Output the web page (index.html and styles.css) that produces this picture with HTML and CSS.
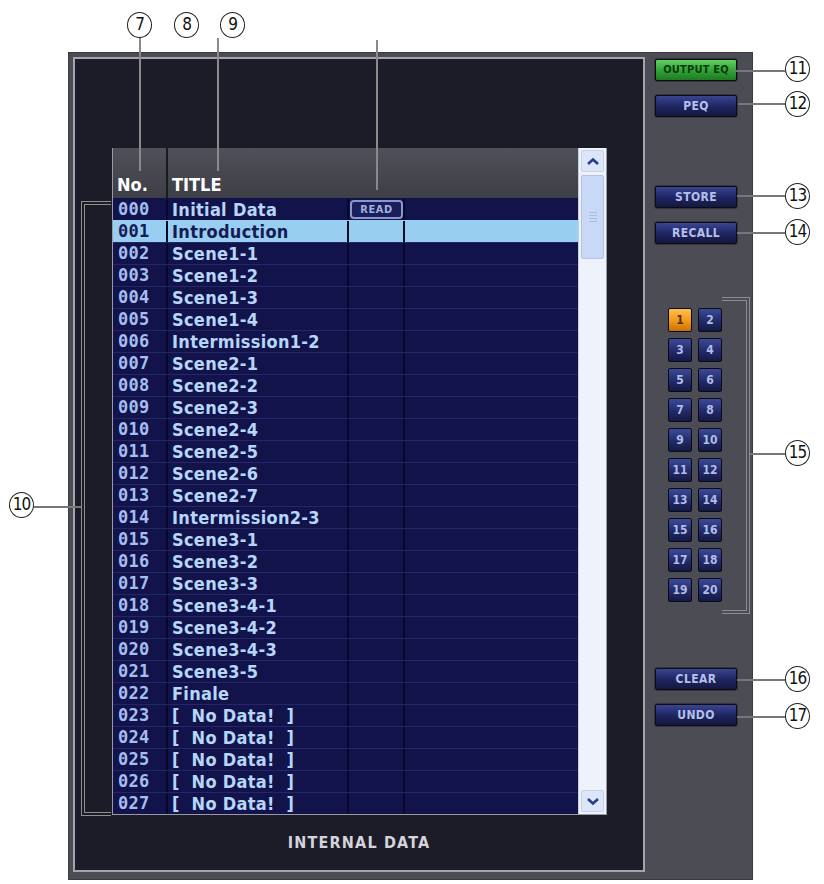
FILE: index.html
```html
<!DOCTYPE html>
<html lang="en">
<head>
  <meta charset="UTF-8">
  <title>Scene Library</title>
  <link rel="stylesheet" href="styles.css">
</head>
<body>
  <div class="figure">

    <!-- MAIN PANEL -->
    <div class="panel">
      <div class="main">
        <div class="list">
          <div class="table">
            <div class="head">
              <div class="hcell">No.</div>
              <div class="hcell nodiv">TITLE</div>
              <div class="hcell nodiv"></div>
              <div class="hcell nodiv"></div>
            </div>
            <div class="row"><span class="num">000</span><span class="title">Initial Data</span><span class="read"><b>READ</b></span><span></span></div>
            <div class="row sel"><span class="num">001</span><span class="title">Introduction</span><span></span><span></span></div>
            <div class="row"><span class="num">002</span><span class="title">Scene1-1</span><span></span><span></span></div>
            <div class="row"><span class="num">003</span><span class="title">Scene1-2</span><span></span><span></span></div>
            <div class="row"><span class="num">004</span><span class="title">Scene1-3</span><span></span><span></span></div>
            <div class="row"><span class="num">005</span><span class="title">Scene1-4</span><span></span><span></span></div>
            <div class="row"><span class="num">006</span><span class="title">Intermission1-2</span><span></span><span></span></div>
            <div class="row"><span class="num">007</span><span class="title">Scene2-1</span><span></span><span></span></div>
            <div class="row"><span class="num">008</span><span class="title">Scene2-2</span><span></span><span></span></div>
            <div class="row"><span class="num">009</span><span class="title">Scene2-3</span><span></span><span></span></div>
            <div class="row"><span class="num">010</span><span class="title">Scene2-4</span><span></span><span></span></div>
            <div class="row"><span class="num">011</span><span class="title">Scene2-5</span><span></span><span></span></div>
            <div class="row"><span class="num">012</span><span class="title">Scene2-6</span><span></span><span></span></div>
            <div class="row"><span class="num">013</span><span class="title">Scene2-7</span><span></span><span></span></div>
            <div class="row"><span class="num">014</span><span class="title">Intermission2-3</span><span></span><span></span></div>
            <div class="row"><span class="num">015</span><span class="title">Scene3-1</span><span></span><span></span></div>
            <div class="row"><span class="num">016</span><span class="title">Scene3-2</span><span></span><span></span></div>
            <div class="row"><span class="num">017</span><span class="title">Scene3-3</span><span></span><span></span></div>
            <div class="row"><span class="num">018</span><span class="title">Scene3-4-1</span><span></span><span></span></div>
            <div class="row"><span class="num">019</span><span class="title">Scene3-4-2</span><span></span><span></span></div>
            <div class="row"><span class="num">020</span><span class="title">Scene3-4-3</span><span></span><span></span></div>
            <div class="row"><span class="num">021</span><span class="title">Scene3-5</span><span></span><span></span></div>
            <div class="row"><span class="num">022</span><span class="title">Finale</span><span></span><span></span></div>
            <div class="row"><span class="num">023</span><span class="title">[&nbsp; No Data!&nbsp; ]</span><span></span><span></span></div>
            <div class="row"><span class="num">024</span><span class="title">[&nbsp; No Data!&nbsp; ]</span><span></span><span></span></div>
            <div class="row"><span class="num">025</span><span class="title">[&nbsp; No Data!&nbsp; ]</span><span></span><span></span></div>
            <div class="row"><span class="num">026</span><span class="title">[&nbsp; No Data!&nbsp; ]</span><span></span><span></span></div>
            <div class="row"><span class="num">027</span><span class="title">[&nbsp; No Data!&nbsp; ]</span><span></span><span></span></div>
          </div>
          <div class="scrollbar">
            <div class="arrow">
              <svg width="14" height="9" viewBox="0 0 14 9"><path d="M2 7 L7 2.5 L12 7" fill="none" stroke="#2a3c8c" stroke-width="2.6"/></svg>
            </div>
            <div class="thumb"><i></i><i></i><i></i><i></i></div>
            <div class="track"></div>
            <div class="arrow">
              <svg width="14" height="9" viewBox="0 0 14 9"><path d="M2 2 L7 6.5 L12 2" fill="none" stroke="#2a3c8c" stroke-width="2.6"/></svg>
            </div>
          </div>
        </div>
        <div class="caption">INTERNAL DATA</div>
      </div>

      <div class="side">
        <div class="btn green">OUTPUT EQ</div>
        <div class="btn gap-s">PEQ</div>
        <div class="btn gap-l">STORE</div>
        <div class="btn gap-s">RECALL</div>
        <div class="keys">
          <div class="key on">1</div><div class="key">2</div>
          <div class="key">3</div><div class="key">4</div>
          <div class="key">5</div><div class="key">6</div>
          <div class="key">7</div><div class="key">8</div>
          <div class="key">9</div><div class="key">10</div>
          <div class="key">11</div><div class="key">12</div>
          <div class="key">13</div><div class="key">14</div>
          <div class="key">15</div><div class="key">16</div>
          <div class="key">17</div><div class="key">18</div>
          <div class="key">19</div><div class="key">20</div>
        </div>
        <div class="btn gap-k">CLEAR</div>
        <div class="btn gap-s">UNDO</div>
      </div>
    </div>

    <!-- CALLOUTS -->
    <div class="circ c7">7</div>
    <div class="circ c8">8</div>
    <div class="circ c9">9</div>
    <div class="vline l7"></div>
    <div class="vline l9"></div>
    <div class="vline lread"></div>

    <div class="circ c10">10</div>
    <div class="hline l10"></div>
    <div class="bracket b10"></div>

    <div class="circ c11">11</div>
    <div class="circ c12">12</div>
    <div class="circ c13">13</div>
    <div class="circ c14">14</div>
    <div class="circ c15">15</div>
    <div class="circ c16">16</div>
    <div class="circ c17">17</div>
    <div class="hline l11"></div>
    <div class="hline l12"></div>
    <div class="hline l13"></div>
    <div class="hline l14"></div>
    <div class="hline l15"></div>
    <div class="hline l16"></div>
    <div class="hline l17"></div>
    <div class="bracket b15"></div>
  </div>
</body>
</html>
```

FILE: styles.css
```css
/* General */
* {
  margin: 0;
  padding: 0;
  box-sizing: border-box;
}
body {
  background: #fff;
  font-family: "DejaVu Sans Condensed", "DejaVu Sans", sans-serif;
}
.figure {
  position: relative;
  width: 824px;
  height: 884px;
  padding: 52px 0 0 68px;
  overflow: hidden;
}

/* ===== PANEL ===== */
.panel {
  display: flex;
  width: 685px;
  height: 828px;
  background: #4c4c55;
  padding: 5px 5px 8px 5px;
  box-shadow: inset 0 0 0 1px #3a3a40;
}
.main {
  display: flex;
  flex-direction: column;
  width: 572px;
  height: 815px;
  border: 2px solid #a4a4ac;
  background: #1c1c28;
  padding: 89px 0 0 37px;
}

/* ===== LIST ===== */
.list {
  display: flex;
  width: 495px;
  height: 667px;
  border: 1px solid #9a9aa6;
  border-top: none;
}
.table {
  width: 466px;
  background: #12124a;
}
.head,
.row {
  display: grid;
  grid-template-columns: 55px 181px 56px 1fr;
}
.head {
  height: 50px;
  background: linear-gradient(#505058, #3e3e46);
}
.hcell {
  display: flex;
  align-items: flex-end;
  padding: 0 0 3px 4px;
  color: #fff;
  font-weight: bold;
  font-size: 18px;
  border-right: 2px solid #1a1a22;
}
.hcell.nodiv {
  border-right: none;
}
.row {
  height: 22px;
  background: #13134c;
  border-top: 1px solid #24266a;
}
.row:nth-of-type(2) {
  border-top-color: #12124a;
}
.row span {
  border-right: 2px solid #08082a;
  line-height: 21px;
  white-space: nowrap;
  overflow: hidden;
}
.row span:last-child {
  border-right: none;
}
.num {
  font-family: "DejaVu Sans Mono", monospace;
  font-weight: bold;
  font-size: 17px;
  letter-spacing: 0.3px;
  color: #a4bef0;
  padding-left: 5px;
}
.title {
  font-weight: bold;
  font-size: 18px;
  letter-spacing: 0.3px;
  color: #b6d6f8;
  padding-left: 4px;
}
.row.sel {
  background: #98cef0;
  border-top-color: #98cef0;
}
.row.sel .num,
.row.sel .title {
  color: #161a56;
}
.read {
  padding: 1px 0 0 1px;
}
.read b {
  display: block;
  width: 53px;
  height: 19px;
  border: 2px solid #8898cc;
  border-radius: 4px;
  background: #1a1e5c;
  color: #a0b0dc;
  font-size: 11px;
  line-height: 15px;
  text-align: center;
  letter-spacing: 0.5px;
}

/* Scrollbar */
.scrollbar {
  display: flex;
  flex-direction: column;
  width: 28px;
  background: #eef2fa;
  border-left: 1px solid #c4cce0;
  padding: 2px;
}
.arrow {
  height: 22px;
  display: flex;
  align-items: center;
  justify-content: center;
  background: #dce6f8;
  border: 1px solid #c4d0ec;
  border-radius: 2px;
}
.thumb {
  height: 84px;
  margin-top: 3px;
  background: #c8d8f6;
  border: 1px solid #b0c2e8;
  border-radius: 2px;
  display: flex;
  flex-direction: column;
  align-items: center;
  justify-content: center;
  gap: 2px;
}
.thumb i {
  display: block;
  width: 8px;
  height: 1px;
  background: #a8bce4;
}
.track {
  flex: 1;
}

.caption {
  display: flex;
  align-items: center;
  justify-content: center;
  height: 55px;
  margin-left: -37px;
  color: #d4d4dc;
  font-weight: bold;
  font-size: 16px;
  letter-spacing: 1.2px;
}

/* ===== SIDE BUTTONS ===== */
.side {
  display: flex;
  flex-direction: column;
  width: 103px;
  padding-left: 10px;
}
.btn {
  width: 82px;
  height: 22px;
  margin-top: 14px;
  border: 1px solid #0c0c16;
  border-radius: 2px;
  background: linear-gradient(#3a4490, #1e2460 55%, #14183e);
  box-shadow: 0 0 0 1px #34343c;
  color: #b4c0ea;
  font-weight: bold;
  font-size: 12px;
  letter-spacing: 0.4px;
  text-align: center;
  line-height: 20px;
}
.btn.green {
  margin-top: 2px;
  background: linear-gradient(#64d064, #2ea234 55%, #1e7a22);
  color: #0c3a0c;
  font-size: 11px;
  letter-spacing: 0.2px;
}
.btn.gap-l { margin-top: 69px; }
.btn.gap-k { margin-top: 66px; }

.keys {
  display: grid;
  grid-template-columns: 24px 24px;
  grid-auto-rows: 24px;
  gap: 6px;
  margin: 64px 0 0 13px;
}
.key {
  border: 1px solid #0a0a18;
  border-radius: 2px;
  background: linear-gradient(#3c4a98, #222a68 55%, #141a44);
  color: #b0bce8;
  font-weight: bold;
  font-size: 12px;
  text-align: center;
  line-height: 22px;
}
.key.on {
  background: linear-gradient(#ffc050, #f09818 55%, #c87208);
  color: #5a2e00;
}

/* ===== CALLOUTS ===== */
.circ {
  position: absolute;
  width: 25px;
  height: 26px;
  border: 1.4px solid #222;
  border-radius: 50%;
  background: #fff;
  color: #111;
  font-size: 17px;
  line-height: 23px;
  text-align: center;
  letter-spacing: -1px;
}
.c7 { left: 127px; top: 12px; }
.c8 { left: 174px; top: 12px; }
.c9 { left: 220px; top: 12px; }
.c10 { left: 9px; top: 492px; }
.c11 { left: 785px; top: 56px; }
.c12 { left: 785px; top: 91px; }
.c13 { left: 785px; top: 183px; }
.c14 { left: 785px; top: 219px; }
.c15 { left: 785px; top: 440px; }
.c16 { left: 785px; top: 666px; }
.c17 { left: 785px; top: 703px; }

.vline {
  position: absolute;
  width: 2px;
  background: #8a8a8a;
}
.l7 { left: 139px; top: 38px; height: 133px; }
.l9 { left: 217px; top: 38px; height: 133px; }
.lread { left: 376px; top: 40px; height: 150px; }

.hline {
  position: absolute;
  height: 2px;
  background: #777;
}
.l10 { left: 34px; top: 506px; width: 48px; }
.l11 { left: 733px; top: 70px; width: 52px; }
.l12 { left: 738px; top: 103px; width: 47px; }
.l13 { left: 737px; top: 195px; width: 48px; }
.l14 { left: 737px; top: 232px; width: 48px; }
.l15 { left: 749px; top: 453px; width: 36px; }
.l16 { left: 737px; top: 679px; width: 48px; }
.l17 { left: 737px; top: 716px; width: 48px; }

.bracket {
  position: absolute;
  border: 4px double #8e8e8e;
}
.b10 {
  left: 81px;
  top: 201px;
  width: 30px;
  height: 615px;
  border-right: none;
}
.b15 {
  left: 722px;
  top: 297px;
  width: 28px;
  height: 317px;
  border-left: none;
}
```
